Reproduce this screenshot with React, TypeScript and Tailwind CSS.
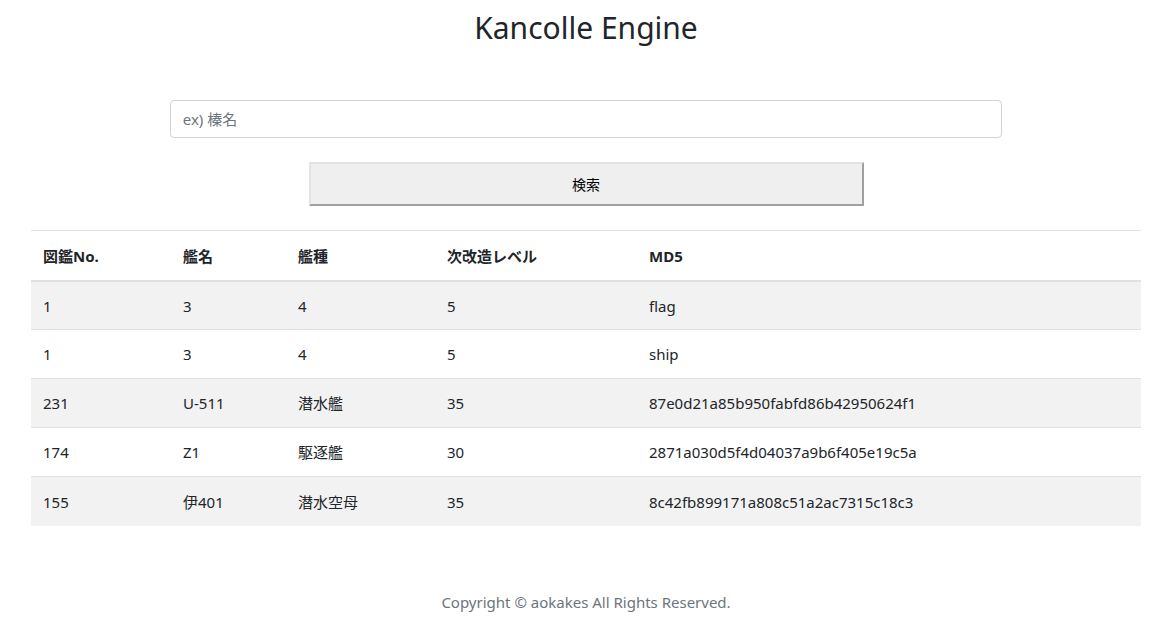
const rows = [
  { no: "1", name: "3", type: "4", lv: "5", md5: "flag" },
  { no: "1", name: "3", type: "4", lv: "5", md5: "ship" },
  { no: "231", name: "U-511", type: "潜水艦", lv: "35", md5: "87e0d21a85b950fabfd86b42950624f1" },
  { no: "174", name: "Z1", type: "駆逐艦", lv: "30", md5: "2871a030d5f4d04037a9b6f405e19c5a" },
  { no: "155", name: "伊401", type: "潜水空母", lv: "35", md5: "8c42fb899171a808c51a2ac7315c18c3" },
];

const font = "font-['Noto_Sans','Noto_Sans_CJK_JP',sans-serif]";

export default function App() {
  return (
    <div className={`${font} text-[15px] text-[#212529] bg-white min-h-[619px] pl-[2px]`}>
      <div className="mx-auto max-w-[1140px] px-[15px]">
        <h1 className="text-center text-[30px] leading-[40px] pt-[8px] font-normal">Kancolle Engine</h1>

        <div className="flex justify-center mt-[52px]">
          <input
            placeholder="ex) 榛名"
            className="w-[75%] h-[38px] border border-[#ced4da] rounded px-3 text-[15px] placeholder:text-[#6c757d] outline-none"
          />
        </div>

        <div className="flex justify-center mt-[24px]">
          <button className="w-[555px] h-[44px] bg-[#efefef] border-2 border-t-[#e3e3e3] border-l-[#e3e3e3] border-b-[#a0a0a0] border-r-[#a0a0a0] text-[14px] text-black">
            検索
          </button>
        </div>

        <table className="w-full mt-[24px] border-collapse">
          <thead>
            <tr className="text-left border-t border-[#dee2e6]">
              <th className="w-[140px] px-3 h-[50px] pt-[2px] font-bold border-b-2 border-[#dee2e6]">図鑑No.</th>
              <th className="w-[115px] px-3 pt-[2px] font-bold border-b-2 border-[#dee2e6]">艦名</th>
              <th className="w-[149px] px-3 pt-[2px] font-bold border-b-2 border-[#dee2e6]">艦種</th>
              <th className="w-[202px] px-3 pt-[2px] font-bold border-b-2 border-[#dee2e6]">次改造レベル</th>
              <th className="px-3 pt-[2px] font-bold border-b-2 border-[#dee2e6]">MD5</th>
            </tr>
          </thead>
          <tbody>
            {rows.map((r, i) => (
              <tr key={i} className={i % 2 === 0 ? "bg-[#f2f2f2]" : "bg-white"}>
                <td className={`px-3 h-[49px] pt-[1px] ${i > 0 ? "border-t border-[#dee2e6]" : ""}`}>{r.no}</td>
                <td className={`px-3 pt-[1px] ${i > 0 ? "border-t border-[#dee2e6]" : ""}`}>{r.name}</td>
                <td className={`px-3 pt-[1px] ${i > 0 ? "border-t border-[#dee2e6]" : ""}`}>{r.type}</td>
                <td className={`px-3 pt-[1px] ${i > 0 ? "border-t border-[#dee2e6]" : ""}`}>{r.lv}</td>
                <td className={`px-3 pt-[1px] ${i > 0 ? "border-t border-[#dee2e6]" : ""}`}>{r.md5}</td>
              </tr>
            ))}
          </tbody>
        </table>

        <p className="text-center text-[#6c757d] mt-[65px] text-[15px]">Copyright © aokakes All Rights Reserved.</p>
      </div>
    </div>
  );
}
